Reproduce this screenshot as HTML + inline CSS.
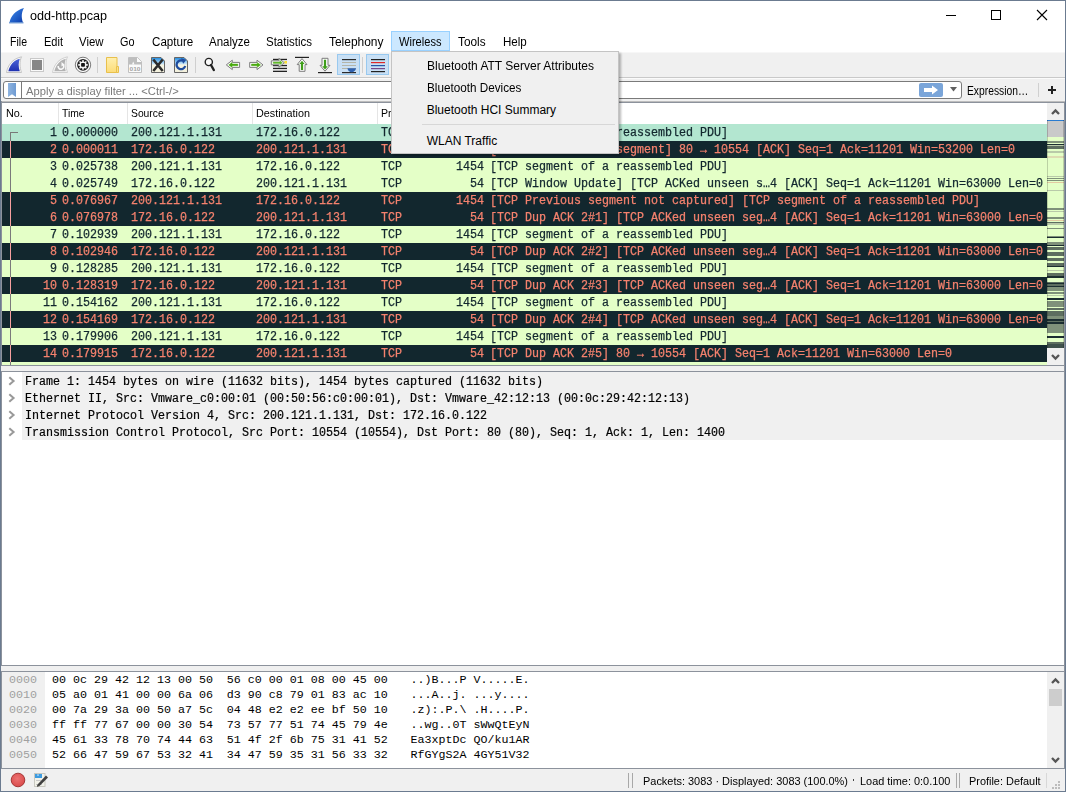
<!DOCTYPE html>
<html><head><meta charset="utf-8">
<style>
*{margin:0;padding:0;box-sizing:border-box}
html,body{width:1066px;height:792px;overflow:hidden;background:#f0f0f0}
body{position:relative;font-family:"Liberation Sans",sans-serif;font-size:12px;color:#000}
.a{position:absolute}
.t{position:absolute;white-space:pre;transform-origin:0 0}
.row{position:absolute;left:2px;width:1045px;height:17px;font-family:"Liberation Mono",monospace;font-size:12px;line-height:17px;white-space:pre;overflow:hidden}
.row span{position:absolute;top:1px;transform:scaleX(.97222);transform-origin:0 0;-webkit-text-stroke:.25px currentColor}
.drow{position:absolute;left:2px;width:1062px;height:17px;font-family:"Liberation Mono",monospace;font-size:12px;line-height:17px;white-space:pre}
.drow .dt{position:absolute;left:22.8px;top:2px;color:#000;transform:scaleX(.97222);transform-origin:0 0;-webkit-text-stroke:.2px currentColor}
.drow:before{content:"";position:absolute;left:20px;top:0;right:0;height:17px;background:#f0f0f0}
.chev{position:absolute;left:6px;top:3.8px}
.hrow{position:absolute;left:2px;width:1045px;height:15px;font-family:"Liberation Mono",monospace;font-size:11.667px;line-height:15px;white-space:pre}
.hrow span{position:absolute;top:1px}
.off{left:7px;color:#a0a0a0}
.hx{left:50px;color:#000}
.asc{left:408.5px;color:#000}
</style></head><body>
<!-- window frame -->
<div class="a" style="left:0;top:0;width:1066px;height:792px;border:1px solid #6b7b90"></div>
<!-- title bar -->
<div class="a" style="left:1px;top:1px;width:1064px;height:51px;background:#fff"></div>
<!-- shark icon in title -->
<svg class="a" style="left:8px;top:7px" width="18" height="17" viewBox="0 0 18 17">
<defs><linearGradient id="sg" x1="0" y1="0" x2="1" y2="1"><stop offset="0" stop-color="#3f8ff0"/><stop offset="1" stop-color="#0b3aa8"/></linearGradient></defs>
<path d="M1.5 15.5 C3 9 7 3.5 16 1 C13.5 5 13 10 15 15.5 Z" fill="url(#sg)"/>
<path d="M1 15 L15.5 15 L15.5 16.5 L1 16.5Z" fill="#5f8fd0" opacity=".8"/>
</svg>
<!-- window controls -->
<div class="a" style="left:946px;top:15px;width:10px;height:1px;background:#000"></div>
<div class="a" style="left:991px;top:10px;width:10px;height:10px;border:1px solid #000"></div>
<svg class="a" style="left:1036px;top:9px" width="12" height="12" viewBox="0 0 12 12"><path d="M1 1 L11 11 M11 1 L1 11" stroke="#000" stroke-width="1.1"/></svg>
<!-- menu highlight -->
<div class="a" style="left:391px;top:31px;width:59px;height:20px;background:#cce8ff;border:1px solid #99d1ff"></div>
<!-- menubar bottom line -->
<div class="a" style="left:1px;top:52px;width:1064px;height:1px;background:#f7f7f7"></div>
<!-- toolbar bottom line -->
<div class="a" style="left:1px;top:77px;width:1064px;height:1px;background:#c9c9c9"></div>
<div class="a" style="left:1px;top:78px;width:1064px;height:1px;background:#fbfbfb"></div>

<!-- toolbar icons -->
<svg class="a" style="left:0;top:0" width="400" height="80" viewBox="0 0 400 80">
 <defs>
  <linearGradient id="bl" x1="0" y1="0" x2="0" y2="1"><stop offset="0" stop-color="#4a64d8"/><stop offset="1" stop-color="#1f30b0"/></linearGradient>
  <linearGradient id="fy" x1="0" y1="0" x2="0" y2="1"><stop offset="0" stop-color="#fff0b0"/><stop offset="1" stop-color="#fcdc78"/></linearGradient>
  <linearGradient id="sky" x1="0" y1="0" x2="0" y2="1"><stop offset="0" stop-color="#1888e0"/><stop offset=".4" stop-color="#bfe0f8"/><stop offset=".5" stop-color="#f6f4e2"/><stop offset="1" stop-color="#f3f0dc"/></linearGradient>
 </defs>
 <!-- shark start -->
 <path d="M6.5 72.5 C8 65 12 59 21.5 56.8 C19.5 61 19.5 67 21.5 72.5 Z" fill="#fafafa" stroke="#c4c4c4" stroke-width="1"/>
 <path d="M8.3 71.3 C10 65 13.5 60.5 19.8 58.8 C18.3 62.5 18.3 67 19.8 71.3 Z" fill="url(#bl)"/>
 <!-- stop -->
 <rect x="30.5" y="58.5" width="13" height="13" fill="#fafafa" stroke="#c8c8c8"/>
 <rect x="32" y="60" width="10" height="10" fill="#878787"/>
 <!-- restart (disabled) -->
 <path d="M52.5 72.5 C54 65 58 59 67.5 56.8 C65.5 61 65.5 67 67.5 72.5 Z" fill="#fafafa" stroke="#cfcfcf" stroke-width="1"/>
 <path d="M54.3 71.3 C56 65 59.5 60.5 65.8 58.8 C64.3 62.5 64.3 67 65.8 71.3 Z" fill="#b2b2b2"/>
 <path d="M58.2 66 a2.8 2.8 0 1 0 4.8 -1.5" fill="none" stroke="#fafafa" stroke-width="1.6"/>
 <path d="M61.5 62 L64.5 64.5 L61.5 66.5Z" fill="#fafafa"/>
 <!-- options gear -->
 <circle cx="83" cy="64.9" r="7.7" fill="#fafafa" stroke="#7a7a7a" stroke-width="1"/>
 <circle cx="83" cy="64.9" r="5.9" fill="#1e1e1e"/>
 <g fill="#f4f4f4">
  <circle cx="83" cy="64.9" r="3.5"/>
  <rect x="82.2" y="60.1" width="1.6" height="9.6"/>
  <rect x="78.2" y="64.1" width="9.6" height="1.6"/>
  <rect x="82.2" y="60.1" width="1.6" height="9.6" transform="rotate(45 83 64.9)"/>
  <rect x="82.2" y="60.1" width="1.6" height="9.6" transform="rotate(-45 83 64.9)"/>
 </g>
 <rect x="81.1" y="63" width="3.8" height="3.8" rx=".8" fill="#151515"/>
 <!-- sep -->
 <rect x="97" y="57" width="1" height="16" fill="#cfcfcf"/>
 <!-- folder -->
 <path d="M106.5 57.5 H117 V72.5 H106.5Z" fill="url(#fy)" stroke="#e8c04c"/>
 <path d="M116.5 66.5 H118.5 V72.5 H116.5Z" fill="#fbe08a" stroke="#e8c04c"/>
 <!-- save file 010 -->
 <path d="M128.5 57.5 H137.5 L141.5 61.5 V72.5 H128.5Z" fill="#fbfbfb" stroke="#c0c0c0"/>
 <path d="M129 58 H137 V62 H141 V64.5 H129Z" fill="#bebebe"/>
 <path d="M137.5 58 L141 61.5 H137.5Z" fill="#fbfbfb"/>
 <path d="M132 64.5 L133.2 61.5 L134.5 64.5Z" fill="#fbfbfb"/>
 <text x="135" y="71" font-family="Liberation Sans" font-size="5.8" font-weight="bold" text-anchor="middle" fill="#a4a4a4" textLength="11" lengthAdjust="spacingAndGlyphs">010</text>
 <!-- close file X -->
 <path d="M151.5 57.5 H161 L164.5 61 V72.5 H151.5Z" fill="url(#sky)" stroke="#666"/>
 <path d="M153.3 59.5 L162.7 71 M162.7 59.5 L153.3 71" stroke="#2b2b2b" stroke-width="2.6"/>
 <!-- reload -->
 <path d="M174.5 57.5 H184 L187.5 61 V72.5 H174.5Z" fill="url(#sky)" stroke="#666"/>
 <path d="M185.2 66 a4.4 4.4 0 1 1 -2.2 -5.2" fill="none" stroke="#1f4c9e" stroke-width="2.3"/>
 <path d="M181 58.3 L186.3 59.8 L183.2 63.8Z" fill="#1f4c9e"/>
 <!-- sep -->
 <rect x="195" y="57" width="1" height="16" fill="#cfcfcf"/>
 <!-- magnifier -->
 <circle cx="208.8" cy="62" r="3.6" fill="#fafafa" stroke="#222" stroke-width="1.4"/>
 <path d="M211 65 L213.8 70" stroke="#222" stroke-width="2.4" stroke-linecap="round"/>
 <!-- back arrow -->
 <path d="M226.3 64.9 L232.3 60.2 V62.4 H239.6 V67.4 H232.3 V69.6Z" fill="#fdfdfd" stroke="#7c7c7c" stroke-width="1" stroke-linejoin="round"/>
 <path d="M228.8 64.9 L232 62.6 V64.1 H237.8 V65.7 H232 V67.2Z" fill="#4aaa10" stroke="#4aaa10" stroke-width=".5" stroke-linejoin="round"/>
 <!-- forward arrow -->
 <path d="M263 64.9 L257 60.2 V62.4 H249.7 V67.4 H257 V69.6Z" fill="#fdfdfd" stroke="#7c7c7c" stroke-width="1" stroke-linejoin="round"/>
 <path d="M260.5 64.9 L257.3 62.6 V64.1 H251.5 V65.7 H257.3 V67.2Z" fill="#4aaa10" stroke="#4aaa10" stroke-width=".5" stroke-linejoin="round"/>
 <!-- goto packet -->
 <rect x="273" y="58.8" width="14" height="1.3" fill="#222"/>
 <rect x="273" y="64.9" width="14" height="1.3" fill="#222"/>
 <rect x="273" y="67.8" width="14" height="1.3" fill="#222"/>
 <rect x="273" y="70.7" width="14" height="1.3" fill="#222"/>
 <rect x="284.3" y="61" width="2.7" height="2.6" fill="#f7de35"/>
 <path d="M271.3 60.8 H278.9 V58.4 L284.3 62.7 L278.9 67.2 V64.8 H271.3Z" fill="#fdfdfd" stroke="#7c7c7c" stroke-width="1" stroke-linejoin="round"/>
 <path d="M273.2 62 H279.8 V60.6 L282.4 62.7 L279.8 64.8 V63.4 H273.2Z" fill="#62b82c" stroke="#62b82c" stroke-width=".4"/>
 <!-- first packet -->
 <rect x="295" y="56.8" width="14" height="1.2" fill="#222"/>
 <path d="M302 58.6 L307 64.6 H305 V71.3 H299.2 V64.6 H297.2Z" fill="#fdfdfd" stroke="#7c7c7c" stroke-width="1" stroke-linejoin="round"/>
 <path d="M302 60.8 L304.6 64 H303.1 V70 H300.9 V64 H299.4Z" fill="#3f9e1a"/>
 <!-- last packet -->
 <rect x="318" y="72" width="14" height="1.2" fill="#222"/>
 <path d="M325 71.2 L330 65.3 H328 V58.3 H322 V65.3 H320Z" fill="#fdfdfd" stroke="#7c7c7c" stroke-width="1" stroke-linejoin="round"/>
 <path d="M325 69.6 L327.8 66.2 H326.1 V59.8 H323.9 V66.2 H322.2Z" fill="#3f9e1a"/>
 <!-- autoscroll (pressed) -->
 <rect x="337.5" y="54.5" width="22" height="20" fill="#c9e0f5" stroke="#99c9ef"/>
 <rect x="342" y="59" width="14" height="1.2" fill="#2a2a2a"/>
 <rect x="342" y="62" width="14" height="1" fill="#b5b5a8"/>
 <rect x="342" y="65" width="14" height="1" fill="#b5b5a8"/>
 <rect x="342" y="68" width="14" height="1" fill="#b5b5a8"/>
 <rect x="342" y="72" width="14" height="1.2" fill="#2a2a2a"/>
 <path d="M347.5 68.3 H356 C356 70.5 353.5 72.3 351.7 72.3 C349.8 72.3 347.5 70.5 347.5 68.3Z" fill="#2f62b0"/>
 <!-- sep -->
 <rect x="362" y="57" width="1" height="16" fill="#cfcfcf"/>
 <!-- colorize (pressed) -->
 <rect x="366.5" y="54.5" width="22" height="20" fill="#c9e0f5" stroke="#99c9ef"/>
 <rect x="371" y="59" width="14" height="1.2" fill="#222"/>
 <rect x="371" y="62" width="14" height="1.2" fill="#e02828"/>
 <rect x="371" y="65" width="14" height="1.2" fill="#2456a8"/>
 <rect x="371" y="68" width="14" height="1.2" fill="#74488a"/>
 <rect x="371" y="71" width="14" height="1.2" fill="#222"/>
</svg>

<!-- filter bar -->
<div class="a" style="left:3px;top:81px;width:959px;height:18px;background:#fff;border:1px solid #7a7a7a;border-radius:3px"></div>
<div class="a" style="left:21px;top:82px;width:1px;height:16px;background:#7a7a7a"></div>
<svg class="a" style="left:8px;top:83px" width="8" height="14" viewBox="0 0 8 14"><defs><linearGradient id="bm" x1="0" y1="0" x2="1" y2="0"><stop offset="0" stop-color="#8fb4e0"/><stop offset="1" stop-color="#6f9bd2"/></linearGradient></defs><path d="M0 0 H8 V14 L4 11.2 L0 14Z" fill="url(#bm)"/></svg>
<div class="a" style="left:919px;top:83px;width:24px;height:14px;background:#7aa5d9;border-radius:2px"></div>
<svg class="a" style="left:921px;top:84px" width="20" height="12" viewBox="0 0 20 12"><path d="M3 4 H11 V1.5 L17 6 L11 10.5 V8 H3Z" fill="#fff"/></svg>
<svg class="a" style="left:950px;top:87px" width="8" height="5" viewBox="0 0 8 5"><path d="M0 0 H7 L3.5 4.5Z" fill="#606060"/></svg>
<div class="a" style="left:1038px;top:83px;width:1px;height:14px;background:#d0d0d0"></div>
<div class="a" style="left:1048px;top:89px;width:8px;height:2px;background:#222"></div>
<div class="a" style="left:1051px;top:86px;width:2px;height:8px;background:#222"></div>

<!-- packet list frame -->
<div class="a" style="left:1px;top:101px;width:1064px;height:1px;background:#bdbdbd"></div><div class="a" style="left:1px;top:102px;width:1064px;height:1px;background:#8c929c"></div>
<div class="a" style="left:1px;top:101px;width:1px;height:265px;background:#8c929c"></div>
<div class="a" style="left:2px;top:103px;width:1045px;height:21px;background:#fff"></div>
<div class="a" style="left:58px;top:103px;width:1px;height:21px;background:#e5e5e5"></div>
<div class="a" style="left:127px;top:103px;width:1px;height:21px;background:#e5e5e5"></div>
<div class="a" style="left:252px;top:103px;width:1px;height:21px;background:#e5e5e5"></div>
<div class="a" style="left:377px;top:103px;width:1px;height:21px;background:#e5e5e5"></div>

<div class="row" style="top:124px;background:#b3e6d0;color:#12272e"><span style="left:47.5px">1</span><span style="left:59.5px">0.000000</span><span style="left:129px">200.121.1.131</span><span style="left:254px">172.16.0.122</span><span style="left:379px">TCP</span><span style="left:454.0px">1454</span><span style="left:487.5px">[TCP segment of a reassembled PDU]</span></div>
<div class="row" style="top:141px;background:#12272e;color:#f5826e"><span style="left:47.5px">2</span><span style="left:59.5px">0.000011</span><span style="left:129px">172.16.0.122</span><span style="left:254px">200.121.1.131</span><span style="left:379px">TCP</span><span style="left:468.0px">54</span><span style="left:487.5px">[TCP ACKed unseen segment] 80 → 10554 [ACK] Seq=1 Ack=11201 Win=53200 Len=0</span></div>
<div class="row" style="top:158px;background:#e4ffc7;color:#12272e"><span style="left:47.5px">3</span><span style="left:59.5px">0.025738</span><span style="left:129px">200.121.1.131</span><span style="left:254px">172.16.0.122</span><span style="left:379px">TCP</span><span style="left:454.0px">1454</span><span style="left:487.5px">[TCP segment of a reassembled PDU]</span></div>
<div class="row" style="top:175px;background:#e4ffc7;color:#12272e"><span style="left:47.5px">4</span><span style="left:59.5px">0.025749</span><span style="left:129px">172.16.0.122</span><span style="left:254px">200.121.1.131</span><span style="left:379px">TCP</span><span style="left:468.0px">54</span><span style="left:487.5px">[TCP Window Update] [TCP ACKed unseen s…4 [ACK] Seq=1 Ack=11201 Win=63000 Len=0</span></div>
<div class="row" style="top:192px;background:#12272e;color:#f5826e"><span style="left:47.5px">5</span><span style="left:59.5px">0.076967</span><span style="left:129px">200.121.1.131</span><span style="left:254px">172.16.0.122</span><span style="left:379px">TCP</span><span style="left:454.0px">1454</span><span style="left:487.5px">[TCP Previous segment not captured] [TCP segment of a reassembled PDU]</span></div>
<div class="row" style="top:209px;background:#12272e;color:#f5826e"><span style="left:47.5px">6</span><span style="left:59.5px">0.076978</span><span style="left:129px">172.16.0.122</span><span style="left:254px">200.121.1.131</span><span style="left:379px">TCP</span><span style="left:468.0px">54</span><span style="left:487.5px">[TCP Dup ACK 2#1] [TCP ACKed unseen seg…4 [ACK] Seq=1 Ack=11201 Win=63000 Len=0</span></div>
<div class="row" style="top:226px;background:#e4ffc7;color:#12272e"><span style="left:47.5px">7</span><span style="left:59.5px">0.102939</span><span style="left:129px">200.121.1.131</span><span style="left:254px">172.16.0.122</span><span style="left:379px">TCP</span><span style="left:454.0px">1454</span><span style="left:487.5px">[TCP segment of a reassembled PDU]</span></div>
<div class="row" style="top:243px;background:#12272e;color:#f5826e"><span style="left:47.5px">8</span><span style="left:59.5px">0.102946</span><span style="left:129px">172.16.0.122</span><span style="left:254px">200.121.1.131</span><span style="left:379px">TCP</span><span style="left:468.0px">54</span><span style="left:487.5px">[TCP Dup ACK 2#2] [TCP ACKed unseen seg…4 [ACK] Seq=1 Ack=11201 Win=63000 Len=0</span></div>
<div class="row" style="top:260px;background:#e4ffc7;color:#12272e"><span style="left:47.5px">9</span><span style="left:59.5px">0.128285</span><span style="left:129px">200.121.1.131</span><span style="left:254px">172.16.0.122</span><span style="left:379px">TCP</span><span style="left:454.0px">1454</span><span style="left:487.5px">[TCP segment of a reassembled PDU]</span></div>
<div class="row" style="top:277px;background:#12272e;color:#f5826e"><span style="left:40.5px">10</span><span style="left:59.5px">0.128319</span><span style="left:129px">172.16.0.122</span><span style="left:254px">200.121.1.131</span><span style="left:379px">TCP</span><span style="left:468.0px">54</span><span style="left:487.5px">[TCP Dup ACK 2#3] [TCP ACKed unseen seg…4 [ACK] Seq=1 Ack=11201 Win=63000 Len=0</span></div>
<div class="row" style="top:294px;background:#e4ffc7;color:#12272e"><span style="left:40.5px">11</span><span style="left:59.5px">0.154162</span><span style="left:129px">200.121.1.131</span><span style="left:254px">172.16.0.122</span><span style="left:379px">TCP</span><span style="left:454.0px">1454</span><span style="left:487.5px">[TCP segment of a reassembled PDU]</span></div>
<div class="row" style="top:311px;background:#12272e;color:#f5826e"><span style="left:40.5px">12</span><span style="left:59.5px">0.154169</span><span style="left:129px">172.16.0.122</span><span style="left:254px">200.121.1.131</span><span style="left:379px">TCP</span><span style="left:468.0px">54</span><span style="left:487.5px">[TCP Dup ACK 2#4] [TCP ACKed unseen seg…4 [ACK] Seq=1 Ack=11201 Win=63000 Len=0</span></div>
<div class="row" style="top:328px;background:#e4ffc7;color:#12272e"><span style="left:40.5px">13</span><span style="left:59.5px">0.179906</span><span style="left:129px">200.121.1.131</span><span style="left:254px">172.16.0.122</span><span style="left:379px">TCP</span><span style="left:454.0px">1454</span><span style="left:487.5px">[TCP segment of a reassembled PDU]</span></div>
<div class="row" style="top:345px;background:#12272e;color:#f5826e"><span style="left:40.5px">14</span><span style="left:59.5px">0.179915</span><span style="left:129px">172.16.0.122</span><span style="left:254px">200.121.1.131</span><span style="left:379px">TCP</span><span style="left:468.0px">54</span><span style="left:487.5px">[TCP Dup ACK 2#5] 80 → 10554 [ACK] Seq=1 Ack=11201 Win=63000 Len=0</span></div>
<div class="row" style="top:362px;height:3px;background:#e4ffc7"></div>
<!-- tree lines -->
<div class="a" style="left:10px;top:132px;width:8px;height:1px;background:#787878"></div>
<div class="a" style="left:10px;top:132px;width:1px;height:233px;background:#7a7a7a"></div>
<div class="a" style="left:10px;top:141px;width:1px;height:17px;background:#f7a0a0"></div>
<div class="a" style="left:10px;top:192px;width:1px;height:34px;background:#f7a0a0"></div>
<div class="a" style="left:10px;top:243px;width:1px;height:17px;background:#f7a0a0"></div>
<div class="a" style="left:10px;top:277px;width:1px;height:17px;background:#f7a0a0"></div>
<div class="a" style="left:10px;top:311px;width:1px;height:17px;background:#f7a0a0"></div>
<div class="a" style="left:10px;top:345px;width:1px;height:17px;background:#f7a0a0"></div>

<!-- packet list scrollbar -->
<div class="a" style="left:1047px;top:103px;width:17px;height:262px;background:#f0f0f0"></div>
<svg class="a" style="left:1051px;top:108px" width="9" height="8" viewBox="0 0 9 8"><path d="M1 6 L4.5 2.5 L8 6" fill="none" stroke="#555" stroke-width="2.3"/></svg>
<svg class="a" style="left:1051px;top:353px" width="9" height="8" viewBox="0 0 9 8"><path d="M1 2 L4.5 5.5 L8 2" fill="none" stroke="#555" stroke-width="2.3"/></svg>
<div class="a" id="mm" style="left:1047px;top:120px;width:17px;height:228px;background:#e4ffc7"><div class="a" style="left:0;top:0;width:17px;height:17px;background:#c9c9c9"></div><div class="a" style="left:0;top:0;width:17px;height:1px;background:#2a7bd0"></div><div class="a" style="left:0;top:21.0px;width:17px;height:2.0px;background:#7f917a"></div><div class="a" style="left:0;top:23.5px;width:17px;height:1.5px;background:#1c2e31"></div><div class="a" style="left:0;top:25.0px;width:17px;height:1.0px;background:#b9caa9"></div><div class="a" style="left:0;top:26.0px;width:17px;height:3.0px;background:#5d6e60"></div><div class="a" style="left:0;top:31.3px;width:17px;height:1.7px;background:#b9caa9"></div><div class="a" style="left:0;top:36.0px;width:17px;height:2.0px;background:#dedcb2"></div><div class="a" style="left:0;top:56.0px;width:17px;height:1.0px;background:#b9caa9"></div><div class="a" style="left:0;top:58.0px;width:17px;height:1.0px;background:#7f917a"></div><div class="a" style="left:0;top:60.0px;width:17px;height:1.0px;background:#7f917a"></div><div class="a" style="left:0;top:62.0px;width:17px;height:1.0px;background:#e3caa2"></div><div class="a" style="left:0;top:70.0px;width:17px;height:1.0px;background:#b9caa9"></div><div class="a" style="left:0;top:88.0px;width:17px;height:1.6px;background:#7f917a"></div><div class="a" style="left:0;top:91.0px;width:17px;height:1.0px;background:#b9caa9"></div><div class="a" style="left:0;top:97.0px;width:17px;height:2.0px;background:#7f917a"></div><div class="a" style="left:0;top:100.0px;width:17px;height:1.0px;background:#e3caa2"></div><div class="a" style="left:0;top:102.0px;width:17px;height:1.0px;background:#5d6e60"></div><div class="a" style="left:0;top:103.0px;width:17px;height:2.0px;background:#b9caa9"></div><div class="a" style="left:0;top:107.8px;width:17px;height:1.0px;background:#7f917a"></div><div class="a" style="left:0;top:116.0px;width:17px;height:1.0px;background:#7f917a"></div><div class="a" style="left:0;top:117.0px;width:17px;height:1.0px;background:#1c2e31"></div><div class="a" style="left:0;top:121.8px;width:17px;height:3.0px;background:#7f917a"></div><div class="a" style="left:0;top:124.8px;width:17px;height:1.2px;background:#1c2e31"></div><div class="a" style="left:0;top:127.0px;width:17px;height:2.6px;background:#5d6e60"></div><div class="a" style="left:0;top:132.0px;width:17px;height:3.7px;background:#5d6e60"></div><div class="a" style="left:0;top:138.2px;width:17px;height:3.1px;background:#5d6e60"></div><div class="a" style="left:0;top:143.3px;width:17px;height:2.7px;background:#5d6e60"></div><div class="a" style="left:0;top:146.0px;width:17px;height:1.0px;background:#1c2e31"></div><div class="a" style="left:0;top:150.3px;width:17px;height:1.0px;background:#b9caa9"></div><div class="a" style="left:0;top:153.4px;width:17px;height:2.6px;background:#5d6e60"></div><div class="a" style="left:0;top:156.0px;width:17px;height:1.5px;background:#1c2e31"></div><div class="a" style="left:0;top:161.5px;width:17px;height:1.5px;background:#5d6e60"></div><div class="a" style="left:0;top:163.0px;width:17px;height:1.0px;background:#1c2e31"></div><div class="a" style="left:0;top:164.0px;width:17px;height:1.6px;background:#5d6e60"></div><div class="a" style="left:0;top:165.6px;width:17px;height:1.4px;background:#1c2e31"></div><div class="a" style="left:0;top:167.0px;width:17px;height:3.6px;background:#7f917a"></div><div class="a" style="left:0;top:172.2px;width:17px;height:1.5px;background:#7f917a"></div><div class="a" style="left:0;top:175.0px;width:17px;height:0.7px;background:#b9caa9"></div><div class="a" style="left:0;top:178.2px;width:17px;height:1.5px;background:#1c2e31"></div><div class="a" style="left:0;top:181.3px;width:17px;height:5.5px;background:#7f917a"></div><div class="a" style="left:0;top:188.3px;width:17px;height:1.5px;background:#5d6e60"></div><div class="a" style="left:0;top:191.4px;width:17px;height:4.6px;background:#5d6e60"></div><div class="a" style="left:0;top:196.0px;width:17px;height:3.0px;background:#7f917a"></div><div class="a" style="left:0;top:199.0px;width:17px;height:2.0px;background:#1c2e31"></div><div class="a" style="left:0;top:201.0px;width:17px;height:1.0px;background:#5d6e60"></div><div class="a" style="left:0;top:202.0px;width:17px;height:1.6px;background:#1c2e31"></div><div class="a" style="left:0;top:203.6px;width:17px;height:9.1px;background:#7f917a"></div><div class="a" style="left:0;top:216.0px;width:17px;height:1.7px;background:#1c2e31"></div><div class="a" style="left:0;top:222.3px;width:17px;height:2.0px;background:#5d6e60"></div><div class="a" style="left:0;top:224.3px;width:17px;height:3.7px;background:#3f514c"></div><div class="a" style="left:0;top:0;width:1px;height:228px;background:rgba(0,0,0,.18)"></div><div class="a" style="left:16px;top:0;width:1px;height:228px;background:rgba(0,0,0,.18)"></div></div>

<!-- splitter1 -->
<div class="a" style="left:1px;top:365px;width:1063px;height:1px;background:#8c929c"></div>
<div class="a" style="left:1px;top:371px;width:1063px;height:1px;background:#8c929c"></div>
<!-- details pane -->
<div class="a" style="left:1px;top:372px;width:1064px;height:293px;background:#fff;border-left:1px solid #8c929c"></div>
<div class="drow" style="top:372px"><svg class="chev" width="8" height="10" viewBox="0 0 8 10"><path d="M1.3 1.2 L5.6 5 L1.3 8.8" fill="none" stroke="#999" stroke-width="2"/></svg><span class="dt">Frame 1: 1454 bytes on wire (11632 bits), 1454 bytes captured (11632 bits)</span></div>
<div class="drow" style="top:389px"><svg class="chev" width="8" height="10" viewBox="0 0 8 10"><path d="M1.3 1.2 L5.6 5 L1.3 8.8" fill="none" stroke="#999" stroke-width="2"/></svg><span class="dt">Ethernet II, Src: Vmware_c0:00:01 (00:50:56:c0:00:01), Dst: Vmware_42:12:13 (00:0c:29:42:12:13)</span></div>
<div class="drow" style="top:406px"><svg class="chev" width="8" height="10" viewBox="0 0 8 10"><path d="M1.3 1.2 L5.6 5 L1.3 8.8" fill="none" stroke="#999" stroke-width="2"/></svg><span class="dt">Internet Protocol Version 4, Src: 200.121.1.131, Dst: 172.16.0.122</span></div>
<div class="drow" style="top:423px"><svg class="chev" width="8" height="10" viewBox="0 0 8 10"><path d="M1.3 1.2 L5.6 5 L1.3 8.8" fill="none" stroke="#999" stroke-width="2"/></svg><span class="dt">Transmission Control Protocol, Src Port: 10554 (10554), Dst Port: 80 (80), Seq: 1, Ack: 1, Len: 1400</span></div>
<div class="a" style="left:1px;top:665px;width:1063px;height:1px;background:#8c929c"></div>
<div class="a" style="left:1px;top:671px;width:1063px;height:1px;background:#8c929c"></div>
<!-- hex pane -->
<div class="a" style="left:1px;top:672px;width:1064px;height:96px;background:#fff;border-left:1px solid #8c929c"></div>
<div class="a" style="left:2px;top:672px;width:43px;height:96px;background:#f0f0f0"></div>
<div class="hrow" style="top:672px"><span class="off">0000</span><span class="hx">00 0c 29 42 12 13 00 50  56 c0 00 01 08 00 45 00</span><span class="asc">..)B...P V.....E.</span></div>
<div class="hrow" style="top:687px"><span class="off">0010</span><span class="hx">05 a0 01 41 00 00 6a 06  d3 90 c8 79 01 83 ac 10</span><span class="asc">...A..j. ...y....</span></div>
<div class="hrow" style="top:702px"><span class="off">0020</span><span class="hx">00 7a 29 3a 00 50 a7 5c  04 48 e2 e2 ee bf 50 10</span><span class="asc">.z):.P.\ .H....P.</span></div>
<div class="hrow" style="top:717px"><span class="off">0030</span><span class="hx">ff ff 77 67 00 00 30 54  73 57 77 51 74 45 79 4e</span><span class="asc">..wg..0T sWwQtEyN</span></div>
<div class="hrow" style="top:732px"><span class="off">0040</span><span class="hx">45 61 33 78 70 74 44 63  51 4f 2f 6b 75 31 41 52</span><span class="asc">Ea3xptDc QO/ku1AR</span></div>
<div class="hrow" style="top:747px"><span class="off">0050</span><span class="hx">52 66 47 59 67 53 32 41  34 47 59 35 31 56 33 32</span><span class="asc">RfGYgS2A 4GY51V32</span></div>
<div class="a" style="left:1047px;top:672px;width:17px;height:96px;background:#f0f0f0"></div>
<svg class="a" style="left:1051px;top:677px" width="9" height="8" viewBox="0 0 9 8"><path d="M1 6 L4.5 2.5 L8 6" fill="none" stroke="#555" stroke-width="2.3"/></svg>
<div class="a" style="left:1049px;top:689px;width:13px;height:17px;background:#cdcdcd"></div>
<svg class="a" style="left:1051px;top:756px" width="9" height="8" viewBox="0 0 9 8"><path d="M1 2 L4.5 5.5 L8 2" fill="none" stroke="#555" stroke-width="2.3"/></svg>

<!-- status bar -->
<div class="a" style="left:1px;top:768px;width:1063px;height:1px;background:#8c929c"></div>
<svg class="a" style="left:10px;top:772px" width="16" height="16" viewBox="0 0 16 16"><defs><radialGradient id="rg" cx=".45" cy=".4" r=".65"><stop offset="0" stop-color="#ec7272"/><stop offset="1" stop-color="#d84848"/></radialGradient></defs><circle cx="8" cy="8" r="6.8" fill="url(#rg)" stroke="#9c2c2c" stroke-width=".9"/></svg>
<svg class="a" style="left:33px;top:772px" width="16" height="16" viewBox="0 0 16 16"><rect x="1.5" y="1.5" width="10.5" height="13" fill="#f2f2ea" stroke="#c8c8c0"/><rect x="2" y="2" width="7" height="4" fill="#3d9be0"/><path d="M4 3.5 L5 2 L6 3.5Z" fill="#fff"/><rect x="3" y="8" width="5" height="1" fill="#c8c8c8"/><rect x="3" y="12" width="6" height="1" fill="#c8c8c8"/><path d="M4.5 12.5 L13 3.5 L15 5.5 L6.5 14Z" fill="#404040"/><path d="M4.5 12.5 L6.5 14 L4 14.8Z" fill="#222"/></svg>
<div class="a" style="left:628px;top:773px;width:1px;height:15px;background:#a8a8a8"></div>
<div class="a" style="left:632px;top:773px;width:1px;height:15px;background:#a8a8a8"></div>
<div class="a" style="left:852.5px;top:779px;width:1.6px;height:1.6px;background:#444"></div>
<div class="a" style="left:956px;top:773px;width:1px;height:15px;background:#a8a8a8"></div>
<div class="a" style="left:959px;top:773px;width:1px;height:15px;background:#a8a8a8"></div>
<div class="a" style="left:1046px;top:773px;width:1px;height:15px;background:#d8d8d8"></div>
<svg class="a" style="left:1050px;top:779px" width="12" height="11" viewBox="0 0 12 11">
<rect x="8" y="2" width="2" height="2" fill="#bcbcbc"/><rect x="5" y="5" width="2" height="2" fill="#bcbcbc"/><rect x="8" y="5" width="2" height="2" fill="#bcbcbc"/><rect x="2" y="8" width="2" height="2" fill="#bcbcbc"/><rect x="5" y="8" width="2" height="2" fill="#bcbcbc"/><rect x="8" y="8" width="2" height="2" fill="#bcbcbc"/></svg>

<div class="t" style="left:30px;top:9.84px;font-size:12px;line-height:12px;color:#000;transform:scaleX(1.0492);">odd-http.pcap</div>
<div class="t" style="left:9.8px;top:35.84px;font-size:12px;line-height:12px;color:#000;transform:scaleX(0.8788);">File</div>
<div class="t" style="left:43.5px;top:35.84px;font-size:12px;line-height:12px;color:#000;transform:scaleX(0.9184);">Edit</div>
<div class="t" style="left:79.2px;top:35.84px;font-size:12px;line-height:12px;color:#000;transform:scaleX(0.9497);">View</div>
<div class="t" style="left:120px;top:35.84px;font-size:12px;line-height:12px;color:#000;transform:scaleX(0.9054);">Go</div>
<div class="t" style="left:151.6px;top:35.84px;font-size:12px;line-height:12px;color:#000;transform:scaleX(0.9671);">Capture</div>
<div class="t" style="left:209.4px;top:35.84px;font-size:12px;line-height:12px;color:#000;transform:scaleX(0.9578);">Analyze</div>
<div class="t" style="left:266px;top:35.84px;font-size:12px;line-height:12px;color:#000;transform:scaleX(0.9580);">Statistics</div>
<div class="t" style="left:328.5px;top:35.84px;font-size:12px;line-height:12px;color:#000;transform:scaleX(0.9960);">Telephony</div>
<div class="t" style="left:399.3px;top:35.84px;font-size:12px;line-height:12px;color:#000;transform:scaleX(0.9236);">Wireless</div>
<div class="t" style="left:458.3px;top:35.84px;font-size:12px;line-height:12px;color:#000;transform:scaleX(0.9852);">Tools</div>
<div class="t" style="left:502.6px;top:35.84px;font-size:12px;line-height:12px;color:#000;transform:scaleX(0.9641);">Help</div>
<div class="t" style="left:5.6px;top:108.26px;font-size:11.5px;line-height:11.5px;color:#000;transform:scaleX(0.9438);">No.</div>
<div class="t" style="left:61.9px;top:108.26px;font-size:11.5px;line-height:11.5px;color:#000;transform:scaleX(0.8950);">Time</div>
<div class="t" style="left:131.3px;top:108.26px;font-size:11.5px;line-height:11.5px;color:#000;transform:scaleX(0.8974);">Source</div>
<div class="t" style="left:256.3px;top:108.26px;font-size:11.5px;line-height:11.5px;color:#000;transform:scaleX(0.9384);">Destination</div>
<div class="t" style="left:381.2px;top:108.26px;font-size:11.5px;line-height:11.5px;color:#000;transform:scaleX(0.9173);">Protocol</div>
<div class="t" style="left:25.5px;top:85.69px;font-size:11px;line-height:11px;color:#7a7a7a;transform:scaleX(1.0195);">Apply a display filter ... &lt;Ctrl-/&gt;</div>
<div class="t" style="left:967.3px;top:84.84px;font-size:12px;line-height:12px;color:#000;transform:scaleX(0.8574);">Expression…</div>
<div class="t" style="left:642.5px;top:775.69px;font-size:11px;line-height:11px;color:#000;transform:scaleX(0.9948);">Packets: 3083 · Displayed: 3083 (100.0%)</div>
<div class="t" style="left:860.4px;top:775.69px;font-size:11px;line-height:11px;color:#000;transform:scaleX(0.9920);">Load time: 0:0.100</div>
<div class="t" style="left:969.4px;top:775.69px;font-size:11px;line-height:11px;color:#000;transform:scaleX(0.9923);">Profile: Default</div>

<!-- popup menu -->
<div class="a" style="left:393px;top:53px;width:228px;height:103px;background:rgba(0,0,0,.28);filter:blur(1.2px)"></div>
<div class="a" style="left:391px;top:51px;width:228px;height:103px;background:#f0f0f0;border:1px solid #c4c4c4"></div>
<div class="a" style="left:422px;top:124px;width:193px;height:1px;background:#d7d7d7"></div>
<div class="t" style="left:426.7px;top:60.34px;font-size:12px;line-height:12px;color:#000;transform:scaleX(1.0001);">Bluetooth ATT Server Attributes</div>
<div class="t" style="left:426.7px;top:82.34px;font-size:12px;line-height:12px;color:#000;transform:scaleX(0.9759);">Bluetooth Devices</div>
<div class="t" style="left:426.7px;top:104.34px;font-size:12px;line-height:12px;color:#000;">Bluetooth HCI Summary</div>
<div class="t" style="left:426.7px;top:135.34px;font-size:12px;line-height:12px;color:#000;">WLAN Traffic</div>
<div class="a" style="left:1064px;top:102px;width:1px;height:667px;background:#8c929c"></div>
<!-- window border on top -->
<div class="a" style="left:0;top:0;width:1066px;height:792px;border:1px solid #6b7b90;pointer-events:none"></div>
</body></html>
